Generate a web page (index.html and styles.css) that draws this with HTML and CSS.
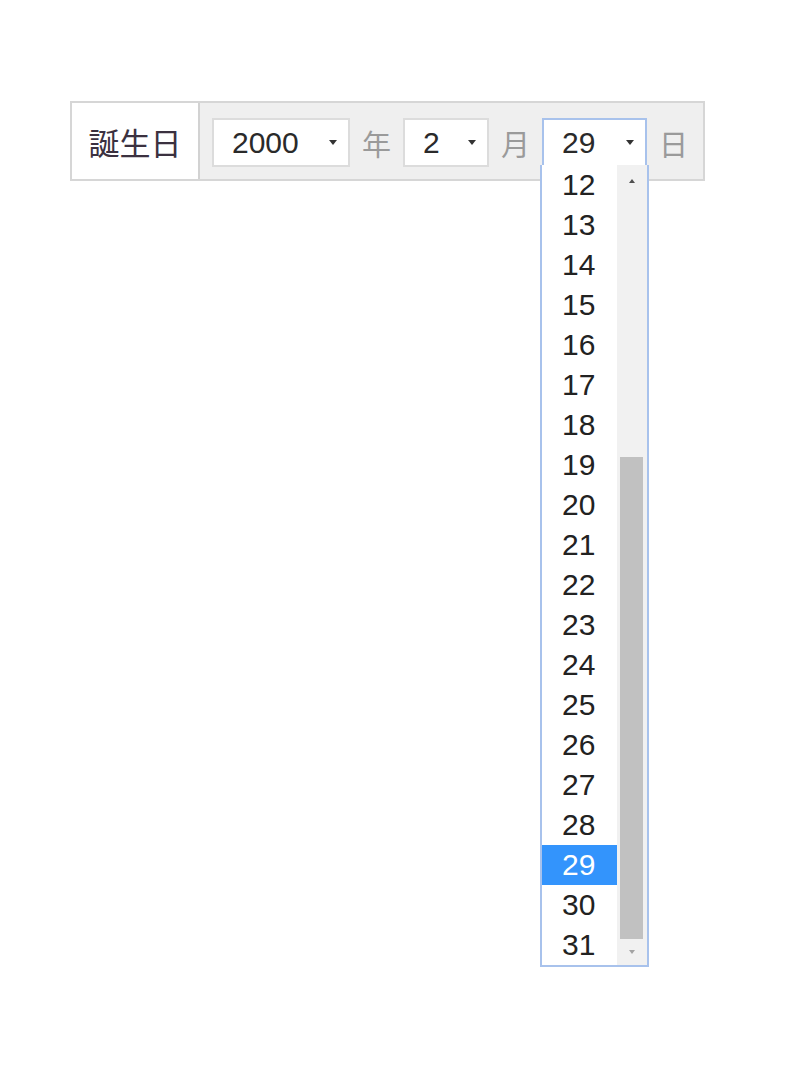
FILE: index.html
```html
<!DOCTYPE html>
<html lang="ja">
<head>
<meta charset="utf-8">
<title>誕生日</title>
<link rel="stylesheet" href="styles.css">
</head>
<body>
<div class="page">
  <div class="row">
    <div class="label">誕生日</div>
    <div class="fields">
      <div class="sel sel-year"><span class="val">2000</span><span class="arrow"></span></div>
      <span class="unit">年</span>
      <div class="sel sel-month"><span class="val">2</span><span class="arrow"></span></div>
      <span class="unit">月</span>
      <div class="sel sel-day focus"><span class="val">29</span><span class="arrow"></span>
        <div class="dropdown">
          <ul class="options">
            <li>12</li><li>13</li><li>14</li><li>15</li><li>16</li>
            <li>17</li><li>18</li><li>19</li><li>20</li><li>21</li>
            <li>22</li><li>23</li><li>24</li><li>25</li><li>26</li>
            <li>27</li><li>28</li><li class="selected">29</li><li>30</li><li>31</li>
          </ul>
          <div class="scrollbar">
            <div class="sb-btn sb-up"><span class="tri-up"></span></div>
            <div class="sb-track"><div class="sb-thumb"></div></div>
            <div class="sb-btn sb-down"><span class="tri-down"></span></div>
          </div>
        </div>
      </div>
      <span class="unit">日</span>
    </div>
  </div>
</div>
</body>
</html>
```

FILE: styles.css
```css
* { box-sizing: border-box; }
html, body { margin: 0; padding: 0; background: #fff; }
body {
  min-height: 1067px;
  font-family: "Liberation Sans", Arial, "Noto Sans CJK JP", sans-serif;
  color: #222;
}
.page { padding: 101px 0 0 70px; min-height: 1067px; }
.row {
  display: flex;
  width: 635px;
  height: 80px;
  border: 2px solid #d6d6d6;
}
.label {
  width: 128px;
  background: #fff;
  border-right: 2px solid #d2d2d2;
  display: flex;
  align-items: center;
  justify-content: center;
  font-family: "Noto Sans CJK JP", sans-serif;
  font-size: 31px;
  color: #3b3140;
}
.fields {
  flex: 1;
  background: #efefef;
  display: flex;
  align-items: center;
  gap: 12px;
  padding-left: 12px;
  padding-top: 3px;
}
.unit {
  font-family: "Noto Sans CJK JP", sans-serif;
  font-size: 29px;
  color: #9a9a9a;
  line-height: 1;
  padding-top: 2px;
}
.sel {
  position: relative;
  height: 49px;
  background: #fff;
  border: 2px solid #dcdcdc;
  display: flex;
  align-items: center;
  padding-left: 18px;
  font-size: 30px;
  color: #2a2a2a;
}
.sel .val { flex: 1; }
.sel .arrow {
  width: 0; height: 0;
  border-left: 4px solid transparent;
  border-right: 4px solid transparent;
  border-top: 5px solid #333;
  margin-right: 11px;
}
.sel-year { width: 138px; }
.sel-month { width: 86px; }
.sel-day { width: 105px; }
.sel.focus { border-color: #a8c2ec; }
.dropdown {
  position: absolute;
  top: 45px;
  left: -4px;
  width: 109px;
  height: 802px;
  background: #fff;
  border: 2px solid #a8c2ec;
  border-top: none;
  display: flex;
  z-index: 2;
}
.options {
  list-style: none;
  margin: 0;
  padding: 0;
  flex: 1;
}
.options li {
  height: 40px;
  line-height: 40px;
  padding-left: 20px;
  font-size: 30px;
  color: #222;
}
.options li.selected {
  background: #3394fc;
  color: #fff;
}
.scrollbar {
  width: 30px;
  background: #f1f1f1;
  display: flex;
  flex-direction: column;
}
.sb-btn {
  display: flex;
  align-items: center;
  justify-content: center;
}
.sb-up { height: 32px; }
.sb-down { height: 26px; }
.sb-track { flex: 1; padding: 260px 4px 0 3px; }
.sb-thumb { height: 482px; background: #c1c1c1; }
.tri-up {
  width: 0; height: 0;
  border-left: 3px solid transparent;
  border-right: 3px solid transparent;
  border-bottom: 4px solid #505050;
}
.tri-down {
  width: 0; height: 0;
  border-left: 3px solid transparent;
  border-right: 3px solid transparent;
  border-top: 4px solid #a3a3a3;
}
```
